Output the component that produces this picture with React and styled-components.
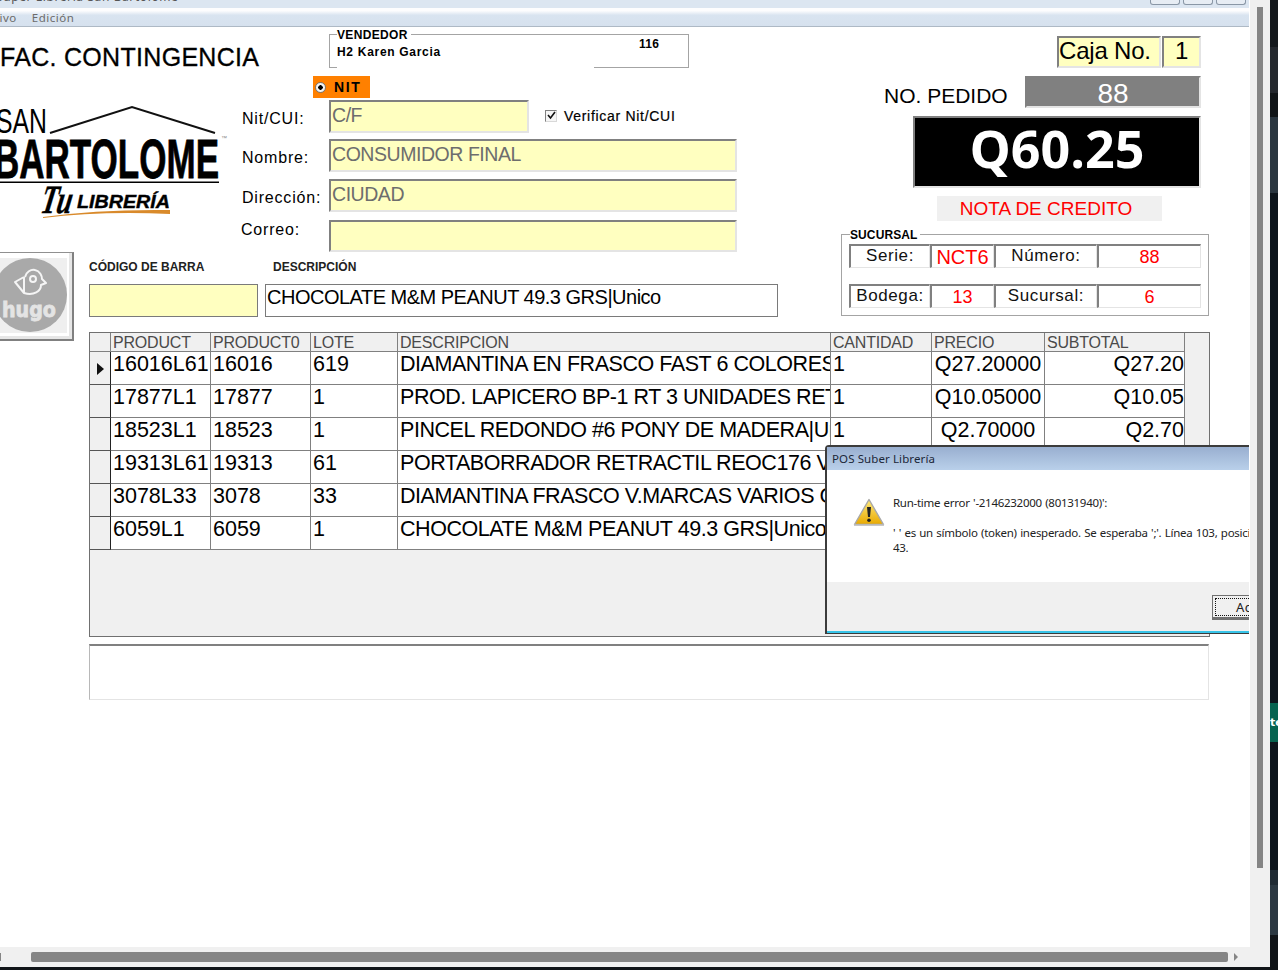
import React from 'react';
import styled, { createGlobalStyle, css } from 'styled-components';

const rows = [
  ['16016L61', '16016', '619', 'DIAMANTINA EN FRASCO FAST 6 COLORES|Unico', '1', 'Q27.20000', 'Q27.20'],
  ['17877L1', '17877', '1', 'PROD. LAPICERO BP-1 RT 3 UNIDADES RETRACTIL', '1', 'Q10.05000', 'Q10.05'],
  ['18523L1', '18523', '1', 'PINCEL REDONDO #6 PONY DE MADERA|Unico', '1', 'Q2.70000', 'Q2.70'],
  ['19313L61', '19313', '61', 'PORTABORRADOR RETRACTIL REOC176 VARIOS', '1', 'Q5.10000', 'Q5.10'],
  ['3078L33', '3078', '33', 'DIAMANTINA FRASCO V.MARCAS VARIOS COLORES', '1', 'Q7.00000', 'Q7.00'],
  ['6059L1', '6059', '1', 'CHOCOLATE M&M PEANUT 49.3 GRS|Unico', '1', 'Q8.20000', 'Q8.20'],
];

const heads = ['PRODUCT', 'PRODUCT0', 'LOTE', 'DESCRIPCION', 'CANTIDAD', 'PRECIO', 'SUBTOTAL'];

const strip = [
  [47, '#14181c'], [46, '#24282e'], [24, '#111518'], [76, '#2a3640'], [510, '#0d151c'],
  [39, '#066350'], [128, '#0d151c'], [15, '#1f2a33'], [50, '#2b3842'], [35, '#101418'],
];

function App() {
  return (
    <Screen>
      <GlobalStyle />
      <TopPart>
        <Window>
          <TitleBar>
            <TitleText>Super Librería San Bartolomé</TitleText>
            <WinButton />
            <WinButton />
            <WinButton />
          </TitleBar>
          <MenuBar>
            <MenuText $cut>Archivo</MenuText>
            <MenuText>Edición</MenuText>
          </MenuBar>

          <TopArea>
            <LeftBlock>
              <HeaderRow>
                <Title>FAC. CONTINGENCIA</Title>
                <VendorFrame>
                  <FrameLegend $sp={0.33}>VENDEDOR</FrameLegend>
                  <VendorName>H2 Karen Garcia</VendorName>
                  <VendorCode>116</VendorCode>
                </VendorFrame>
              </HeaderRow>
              <NitOption>
                <RadioDot />
                NIT
              </NitOption>
              <FormBody>
                <LogoSide>
                  <LogoMark />
                </LogoSide>
                <FormRows>
                  <FormRow>
                    <FieldLabel>Nit/CUI:</FieldLabel>
                    <YellowField $w={200}>C/F</YellowField>
                    <CheckLabel>
                      <CheckBox>
                        <svg width="9" height="9" viewBox="0 0 9 9">
                          <path d="M1 4 L3.5 7 L8 1" fill="none" stroke="#111" strokeWidth="1.6" />
                        </svg>
                      </CheckBox>
                      Verificar Nit/CUI
                    </CheckLabel>
                  </FormRow>
                  <FormRow $top={6}>
                    <FieldLabel>Nombre:</FieldLabel>
                    <YellowField $w={408}>CONSUMIDOR FINAL</YellowField>
                  </FormRow>
                  <FormRow $top={7}>
                    <FieldLabel>Dirección:</FieldLabel>
                    <YellowField $w={408}>CIUDAD</YellowField>
                  </FormRow>
                  <FormRow $top={8}>
                    <FieldLabel $raise>Correo:</FieldLabel>
                    <YellowField $w={408} $h={32} />
                  </FormRow>
                </FormRows>
              </FormBody>
              <BarRow>
                <HugoBox>
                  <HugoMark />
                </HugoBox>
                <BarColumn $w={169}>
                  <SmallHead>CÓDIGO DE BARRA</SmallHead>
                  <YellowField $w={169} $plain />
                </BarColumn>
                <BarColumn $w={513}>
                  <SmallHead $indent>DESCRIPCIÓN</SmallHead>
                  <DescField>CHOCOLATE M&amp;M PEANUT 49.3 GRS|Unico</DescField>
                </BarColumn>
              </BarRow>
            </LeftBlock>

            <RightBlock>
              <CajaRow>
                <CajaCell $w={104}>Caja No.</CajaCell>
                <CajaCell $w={39} $center>1</CajaCell>
              </CajaRow>
              <PedidoRow>
                <PedidoLabel>NO. PEDIDO</PedidoLabel>
                <PedidoValue>88</PedidoValue>
              </PedidoRow>
              <AmountBox>Q60.25</AmountBox>
              <CreditNote>NOTA DE CREDITO</CreditNote>
              <BranchFrame>
                <FrameLegend $sp={0.1} $left={8}>SUCURSAL</FrameLegend>
                <BranchGrid>
                  <BranchCell>Serie:</BranchCell>
                  <BranchCell $red $big>NCT6</BranchCell>
                  <BranchCell>Número:</BranchCell>
                  <BranchCell $red>88</BranchCell>
                  <BranchCell>Bodega:</BranchCell>
                  <BranchCell $red>13</BranchCell>
                  <BranchCell>Sucursal:</BranchCell>
                  <BranchCell $red>6</BranchCell>
                </BranchGrid>
              </BranchFrame>
            </RightBlock>
          </TopArea>

          <DataGrid>
            <HeadRow>
              <HeadCell />
              {heads.map((h) => (
                <HeadCell key={h}>{h}</HeadCell>
              ))}
            </HeadRow>
            {rows.map((r, i) => (
              <DataRow key={r[0]}>
                <Indicator>{i === 0 && <Arrow />}</Indicator>
                <DataCell>{r[0]}</DataCell>
                <DataCell>{r[1]}</DataCell>
                <DataCell>{r[2]}</DataCell>
                <DataCell $tight>{r[3]}</DataCell>
                <DataCell>{r[4]}</DataCell>
                <DataCell $align="center">{r[5]}</DataCell>
                <DataCell $align="right">{r[6]}</DataCell>
              </DataRow>
            ))}
          </DataGrid>
          <NotesBox />

          <Dialog>
            <DialogTitle>POS Suber Librería</DialogTitle>
            <DialogBody>
              <WarningIcon />
              <DialogText>
                Run-time error '-2146232000 (80131940)':
                <br />
                <br />
                ' ' es un símbolo (token) inesperado. Se esperaba ';'. Línea 103, posición
                <br />
                43.
              </DialogText>
            </DialogBody>
            <DialogFooter>
              <DialogButton>
                <ButtonInner>Aceptar</ButtonInner>
              </DialogButton>
            </DialogFooter>
          </Dialog>
        </Window>
        <VScroll>
          <VThumb />
        </VScroll>
      </TopPart>
      <HScroll>
        <HStub />
        <HThumb />
        <HArrow />
      </HScroll>
      <DesktopStrip>
        {strip.map(([h, c], i) => (
          <Band key={i} $h={h} $c={c}>
            {c === '#066350' && 'te'}
          </Band>
        ))}
      </DesktopStrip>
    </Screen>
  );
}

export default App;

function LogoMark() {
  return (
    <svg width="241" height="120" viewBox="0 103 241 120">
      <text x="-4" y="133" fontFamily="Liberation Sans" fontSize="35" textLength="51" lengthAdjust="spacingAndGlyphs">SAN</text>
      <polyline points="50,133 132,107 215,133" fill="none" stroke="#111" strokeWidth="2" />
      <text x="-6" y="178" fontFamily="Liberation Sans" fontWeight="700" fontSize="56" stroke="#000" strokeWidth="0.8" textLength="225" lengthAdjust="spacingAndGlyphs">BARTOLOME</text>
      <rect x="0" y="181.5" width="219" height="1.5" fill="#000" />
      <text x="221" y="140" fontFamily="Liberation Sans" fontSize="6" fill="#888">™</text>
      <text x="77" y="213" transform="skewX(-10)" fontFamily="Liberation Serif" fontStyle="italic" fontWeight="700" fontSize="40" stroke="#000" strokeWidth="0.4" textLength="31" lengthAdjust="spacingAndGlyphs">Tu</text>
      <text x="77" y="208" fontFamily="Liberation Sans" fontStyle="italic" fontWeight="700" fontSize="19" stroke="#000" strokeWidth="0.4" textLength="93" lengthAdjust="spacingAndGlyphs">LIBRERÍA</text>
      <path d="M43 217 Q100 209 170 210 L170 214 Q100 211 43 218 Z" fill="#d98a2b" />
    </svg>
  );
}

function HugoMark() {
  return (
    <svg width="67" height="75" viewBox="0 258 67 75">
      <circle cx="30" cy="295" r="37" fill="#a9a9a9" />
      <g fill="none" stroke="#f5f5f5" strokeWidth="2" strokeLinejoin="round">
        <path d="M25 277 C26 272 31 269 35 270 C40 271 42 276 42 279 L46 283 L41 285 C41 291 34 296 24 293 L24 277" />
        <path d="M24 277 L15 282 L24 293" />
        <circle cx="33" cy="279" r="3" />
      </g>
      <text x="2" y="317" fontFamily="DejaVu Sans" fontWeight="700" fontSize="21" fill="#e4e4e4" stroke="#e4e4e4" strokeWidth="0.8" textLength="54" lengthAdjust="spacingAndGlyphs">hugo</text>
    </svg>
  );
}

function WarningIcon() {
  return (
    <svg width="32" height="29" viewBox="0 0 32 29">
      <defs>
        <linearGradient id="warn" x1="0" y1="0" x2="0" y2="1">
          <stop offset="0" stopColor="#ffe97a" />
          <stop offset="1" stopColor="#e8a900" />
        </linearGradient>
      </defs>
      <path d="M16 1.5 L30.5 26.5 L1.5 26.5 Z" fill="url(#warn)" stroke="#a8a8a8" strokeWidth="1.4" strokeLinejoin="round" />
      <rect x="1" y="26.5" width="30" height="1.5" fill="#c8c8c8" />
      <path d="M14 9 L18 9 L17 19 L15 19 Z" fill="#222" />
      <circle cx="16" cy="22.3" r="1.8" fill="#222" />
    </svg>
  );
}

// styles

const GlobalStyle = createGlobalStyle`
  html, body {
    margin: 0;
    padding: 0;
    background: #fff;
    overflow: hidden;
  }
  * {
    box-sizing: border-box;
  }
`;

const sunken = css`
  border-style: solid;
  border-width: 2px;
  border-color: #808080 #e4e4e4 #e4e4e4 #808080;
`;

const Screen = styled.div`
  position: relative;
  width: 1278px;
  height: 970px;
  overflow: hidden;
  background: #101418;
  font-family: 'Liberation Sans', Arial, sans-serif;
  color: #000;
`;

const TopPart = styled.div`
  display: flex;
  width: 1270px;
  height: 947px;
`;

const Window = styled.div`
  position: relative;
  width: 1250px;
  background: #fff;
  border-right: 1px solid #fff;
  overflow: hidden;
`;

const TitleBar = styled.div`
  display: flex;
  gap: 3px;
  height: 8px;
  padding-right: 3px;
  background: #dce6f1;
  overflow: hidden;
`;

const TitleText = styled.span`
  flex: 1;
  margin-left: -4px;
  margin-top: -10px;
  font: 12px 'Noto Sans', sans-serif;
  letter-spacing: 0.6px;
  line-height: 14px;
  color: #555;
`;

const WinButton = styled.span`
  width: 30px;
  height: 5px;
  border: 1px solid #8a97a6;
  border-top: 0;
  border-radius: 0 0 3px 3px;
  background: #e7edf4;
`;

const MenuBar = styled.div`
  display: flex;
  gap: 15px;
  align-items: center;
  height: 19px;
  padding-top: 1px;
  background: linear-gradient(#fdfdfe 0, #fdfdfe 15%, #d9e4f0 40%, #d6e1ee 100%);
  border-bottom: 1px solid #aeb9c5;
  overflow: hidden;
`;

const MenuText = styled.span`
  font: 11.5px 'Noto Sans', sans-serif;
  letter-spacing: 0.5px;
  color: #6b6b6b;
  margin-left: ${(p) => (p.$cut ? '-27px' : '0')};
`;

const TopArea = styled.div`
  display: flex;
  height: 305px;
`;

const LeftBlock = styled.div`
  width: 841px;
`;

const HeaderRow = styled.div`
  display: flex;
  height: 34px;
  margin-top: 7px;
`;

const Title = styled.h1`
  width: 329px;
  margin: 0;
  padding-top: 9px;
  font-size: 25px;
  font-weight: 400;
  line-height: 28px;
  letter-spacing: 0.3px;
  -webkit-text-stroke: 0.3px #000;
  white-space: nowrap;
`;

const VendorFrame = styled.div`
  position: relative;
  width: 360px;
  height: 34px;
  border: 1px solid #a4a4a4;
  &::after {
    content: '';
    position: absolute;
    left: 7px;
    bottom: -1px;
    width: 257px;
    height: 1px;
    background: #fff;
  }
`;

const FrameLegend = styled.span`
  position: absolute;
  top: -6px;
  left: ${(p) => p.$left || 7}px;
  padding-right: 3px;
  background: #fff;
  font-size: 12px;
  font-weight: 700;
  line-height: 12px;
  letter-spacing: ${(p) => p.$sp}px;
`;

const VendorName = styled.span`
  position: absolute;
  top: 10px;
  left: 7px;
  font-size: 12px;
  font-weight: 700;
  line-height: 14px;
  letter-spacing: 0.7px;
`;

const VendorCode = styled.span`
  position: absolute;
  top: 2px;
  left: 309px;
  font-size: 12px;
  font-weight: 700;
  line-height: 14px;
  letter-spacing: 0.3px;
`;

const NitOption = styled.div`
  display: flex;
  align-items: center;
  gap: 8px;
  width: 57px;
  height: 22px;
  margin: 8px 0 2px 313px;
  padding-left: 2px;
  background: #ff8000;
  font-size: 14px;
  font-weight: 700;
  letter-spacing: 1.6px;
`;

const RadioDot = styled.span`
  width: 11px;
  height: 11px;
  border-radius: 50%;
  border: 1px solid #777;
  background: radial-gradient(circle, #000 0, #000 2px, #f4f4f4 2.5px);
`;

const FormBody = styled.div`
  display: flex;
  height: 152px;
`;

const LogoSide = styled.div`
  width: 241px;
  padding-top: 3px;
`;

const FormRows = styled.div`
  display: flex;
  flex-direction: column;
`;

const FormRow = styled.div`
  display: flex;
  align-items: center;
  margin-top: ${(p) => p.$top || 0}px;
`;

const FieldLabel = styled.span`
  position: relative;
  top: ${(p) => (p.$raise ? '-6px' : '2px')};
  width: 88px;
  font-size: 16px;
  letter-spacing: 0.8px;
  padding-left: ${(p) => (p.$raise ? '0' : '1px')};
  white-space: nowrap;
`;

const YellowField = styled.div`
  ${(p) =>
    p.$plain
      ? css`
          border: 1px solid #7a7a7a;
        `
      : sunken}
  width: ${(p) => p.$w}px;
  height: ${(p) => p.$h || 33}px;
  padding-left: 1px;
  background: #ffffc0;
  color: #6d6d6d;
  font-size: 19.5px;
  line-height: 26px;
  letter-spacing: -0.45px;
  white-space: nowrap;
`;

const CheckLabel = styled.span`
  display: flex;
  align-items: center;
  gap: 7px;
  margin: -2px 0 0 16px;
  font-size: 14px;
  letter-spacing: 0.7px;
  -webkit-text-stroke: 0.2px #000;
`;

const CheckBox = styled.span`
  display: flex;
  align-items: center;
  justify-content: center;
  width: 12px;
  height: 12px;
  border-style: solid;
  border-width: 1px;
  border-color: #808080 #d8d8d8 #d8d8d8 #808080;
  background: #f6f6f6;
`;

const BarRow = styled.div`
  display: flex;
  align-items: flex-start;
`;

const HugoBox = styled.div`
  flex: none;
  width: 74px;
  height: 89px;
  margin-right: 15px;
  padding-top: 5px;
  border-top: 1px solid #909090;
  border-right: 2px solid #808080;
  border-bottom: 2px solid #808080;
  background: #fff;
  line-height: 0;
  box-shadow: inset -3px -3px 0 #e6e6e6;
  svg {
    background: #efefef;
  }
`;

const BarColumn = styled.div`
  flex: none;
  width: ${(p) => p.$w}px;
  margin-right: 7px;
`;

const SmallHead = styled.div`
  display: flex;
  align-items: center;
  height: 32px;
  padding-left: ${(p) => (p.$indent ? '8px' : '0')};
  padding-bottom: 2px;
  font-size: 12px;
  font-weight: 700;
  letter-spacing: 0;
  color: #222;
  white-space: nowrap;
`;

const DescField = styled.div`
  height: 33px;
  padding: 0 1px;
  border: 1px solid #7a7a7a;
  font-size: 20px;
  line-height: 24px;
  letter-spacing: -0.5px;
  white-space: nowrap;
`;

const RightBlock = styled.div`
  display: flex;
  flex-direction: column;
  width: 368px;
  padding-top: 9px;
`;

const CajaRow = styled.div`
  display: flex;
  gap: 1px;
  margin-left: 216px;
`;

const CajaCell = styled.div`
  ${sunken}
  width: ${(p) => p.$w}px;
  height: 32px;
  background: #ffffc0;
  font-size: 24px;
  line-height: 26px;
  letter-spacing: -0.2px;
  text-align: ${(p) => (p.$center ? 'center' : 'left')};
`;

const PedidoRow = styled.div`
  display: flex;
  margin: 8px 0 0 43px;
`;

const PedidoLabel = styled.span`
  width: 141px;
  padding-top: 7px;
  font-size: 21px;
  line-height: 25px;
  white-space: nowrap;
`;

const PedidoValue = styled.div`
  ${sunken}
  width: 176px;
  height: 32px;
  background: #808080;
  color: #fff;
  font-size: 28px;
  line-height: 32px;
  text-align: center;
`;

const AmountBox = styled.div`
  ${sunken}
  width: 288px;
  height: 72px;
  margin: 8px 0 0 72px;
  background: #000;
  color: #fff;
  font-family: 'Open Sans', sans-serif;
  font-size: 52px;
  font-weight: 700;
  line-height: 60px;
  text-align: center;
`;

const CreditNote = styled.div`
  width: 225px;
  height: 25px;
  margin: 8px 0 0 96px;
  padding-right: 7px;
  background: #f0f0f0;
  color: #ff0000;
  font-size: 19px;
  line-height: 25px;
  text-align: center;
  white-space: nowrap;
`;

const BranchFrame = styled.div`
  position: relative;
  width: 368px;
  height: 82px;
  margin-top: 13px;
  padding: 9px 0 0 7px;
  border: 1px solid #a4a4a4;
`;

const BranchGrid = styled.div`
  display: grid;
  grid-template-columns: 81px 64px 103px 104px;
  grid-auto-rows: 24px;
  row-gap: 16px;
`;

const BranchCell = styled.div`
  ${sunken}
  border-width: 2px 1px 1px 2px;
  color: ${(p) => (p.$red ? '#ff0000' : '#111')};
  font-size: ${(p) => (p.$big ? '20px' : p.$red ? '18px' : '17px')};
  line-height: ${(p) => (p.$red ? '23px' : '20px')};
  letter-spacing: ${(p) => (p.$red ? '0' : '0.6px')};
  text-align: center;
  white-space: nowrap;
`;

const DataGrid = styled.div`
  width: 1121px;
  height: 305px;
  margin-left: 89px;
  border: 1px solid #707070;
  background: #f0f0f0;
`;

const gridColumns = css`
  display: grid;
  grid-template-columns: 21px 100px 100px 87px 433px 101px 113px 140px;
`;

const HeadRow = styled.div`
  ${gridColumns}
  height: 19px;
`;

const HeadCell = styled.div`
  padding-left: 2px;
  border-right: 1px solid #808080;
  border-bottom: 1px solid #808080;
  font-size: 16px;
  line-height: 19px;
  letter-spacing: -0.2px;
  color: #4a4a4a;
  white-space: nowrap;
  overflow: hidden;
`;

const DataRow = styled.div`
  ${gridColumns}
  height: 33px;
`;

const Indicator = styled.div`
  display: flex;
  align-items: center;
  justify-content: center;
  padding-top: 2px;
  border-right: 1px solid #222;
  border-bottom: 1px solid #555;
  background: #f0f0f0;
`;

const Arrow = styled.span`
  width: 0;
  height: 0;
  margin-left: 1px;
  border-style: solid;
  border-width: 6px 0 6px 7px;
  border-color: transparent transparent transparent #111;
`;

const DataCell = styled.div`
  padding: 0 ${(p) => (p.$align === 'right' ? '0' : '2px')};
  border-right: 1px solid #808080;
  border-bottom: 1px solid #808080;
  background: #fff;
  font-size: 21.5px;
  line-height: 24px;
  letter-spacing: ${(p) => (p.$tight ? '-0.45px' : '0')};
  text-align: ${(p) => p.$align || 'left'};
  white-space: nowrap;
  overflow: hidden;
`;

const NotesBox = styled.div`
  width: 1120px;
  height: 56px;
  margin: 7px 0 0 89px;
  border-top: 2px solid #808080;
  border-left: 1px solid #b8b8b8;
  border-right: 1px solid #e4e4e4;
  border-bottom: 1px solid #e4e4e4;
`;

const Dialog = styled.div`
  position: absolute;
  top: 445px;
  left: 825px;
  width: 470px;
  height: 189px;
  border: 1px solid #3c3c3c;
  border-width: 2px 1px 1px 2px;
  border-radius: 4px 0 0 0;
  background: #fff;
  display: flex;
  flex-direction: column;
  font-family: 'Noto Sans', sans-serif;
`;

const DialogTitle = styled.div`
  height: 23px;
  padding-left: 5px;
  background: linear-gradient(#99afd0, #b9d0ea);
  font-size: 11.5px;
  line-height: 23px;
  letter-spacing: 0.1px;
  color: #1b2738;
`;

const DialogBody = styled.div`
  display: flex;
  gap: 8px;
  height: 112px;
  padding: 28px 0 0 26px;
`;

const DialogText = styled.div`
  margin-top: -3px;
  font-size: 11.5px;
  line-height: 15px;
  letter-spacing: -0.28px;
  word-spacing: 0.7px;
  color: #222;
  white-space: nowrap;
`;

const DialogFooter = styled.div`
  flex: 1;
  padding: 13px 0 0 385px;
  background: #f0f0f0;
  border-bottom: 2px solid #38c4e8;
`;

const DialogButton = styled.div`
  width: 88px;
  height: 25px;
  padding: 2px;
  border: 1px solid #707070;
  border-bottom: 3px solid #707070;
  background: #f0f0f0;
`;

const ButtonInner = styled.div`
  height: 18px;
  padding-left: 20px;
  border: 1px dotted #111;
  font-size: 13px;
  line-height: 16px;
  letter-spacing: 0.5px;
  color: #222;
`;

const VScroll = styled.div`
  flex: none;
  width: 20px;
  padding: 7px 7px 0;
  background: #f0f0f0;
`;

const VThumb = styled.div`
  width: 6px;
  height: 861px;
  background: #858585;
`;

const HScroll = styled.div`
  display: flex;
  align-items: center;
  width: 1270px;
  height: 20px;
  background: #f0f0f0;
`;

const HStub = styled.div`
  width: 1px;
  height: 8px;
  margin-right: 30px;
  background: #858585;
`;

const HThumb = styled.div`
  width: 1197px;
  height: 10px;
  border-radius: 2px;
  background: #858585;
`;

const HArrow = styled.div`
  width: 0;
  height: 0;
  margin-left: 6px;
  border-style: solid;
  border-width: 4px 0 4px 4px;
  border-color: transparent transparent transparent #858585;
`;

const DesktopStrip = styled.div`
  position: absolute;
  top: 0;
  right: 0;
  width: 8px;
  overflow: hidden;
`;

const Band = styled.div`
  height: ${(p) => p.$h}px;
  background: ${(p) => p.$c};
  color: #fff;
  font: 700 11px/39px 'DejaVu Sans', sans-serif;
  white-space: nowrap;
`;
